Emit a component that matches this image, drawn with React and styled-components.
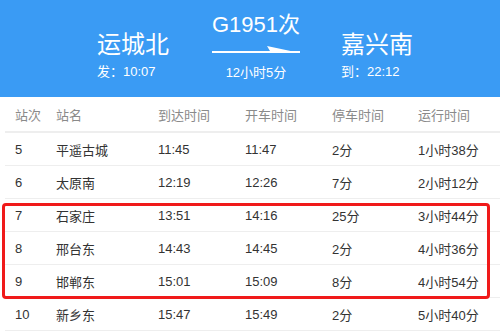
import React from "react";
import styled, { createGlobalStyle } from "styled-components";

const Global = createGlobalStyle`
  html, body { margin: 0; padding: 0; background: #fff; }
  body { font-family: "Liberation Sans", "Noto Sans CJK SC", sans-serif; }
`;

const Page = styled.div`
  width: 500px;
  height: 334px;
  overflow: hidden;
  background: #fff;
`;

const Banner = styled.header`
  height: 97px;
  box-sizing: border-box;
  background: #3a9bf4;
  color: #fff;
  display: flex;
  align-items: flex-start;
  padding: 12px 0 0 97px;
`;

const Station = styled.div`
  display: flex;
  flex-direction: column;
  padding-top: 18px;
  width: 74px;
`;

const StationName = styled.div`
  font-size: 24px;
  line-height: 30px;
  white-space: nowrap;
`;

const SubText = styled.div`
  font-size: 13px;
  line-height: 18px;
  margin-top: 3px;
  white-space: nowrap;
`;

const Train = styled.div`
  display: flex;
  flex-direction: column;
  align-items: center;
  width: 88px;
  margin: 0 41px 0 41px;
`;

const TrainNo = styled.div`
  font-size: 22px;
  line-height: 26px;
  white-space: nowrap;
`;

const Arrow = styled.svg`
  display: block;
  margin-top: 8px;
`;

const Duration = styled(SubText)`
  margin-top: 10px;
`;

const Table = styled.div`
  display: flex;
  flex-direction: column;
`;

const Row = styled.div`
  margin-left: 5px;
  padding-left: 10px;
  display: grid;
  grid-template-columns: 41px 102px 87px 87px 86px 1fr;
  align-items: center;
  height: ${(p) => (p.$head ? "34px" : "32px")};
  border-bottom: ${(p) => (p.$head ? "2px" : "1px")} solid #eeeeee;
  font-size: 13px;
  color: ${(p) => (p.$head ? "#8a8a8a" : "#333")};
  white-space: nowrap;
`;

const Highlight = styled.div`
  position: relative;
  &::after {
    content: "";
    position: absolute;
    top: 4px;
    left: 2px;
    right: 10px;
    bottom: -1px;
    border: 3px solid #f01a1a;
    border-radius: 4px;
    pointer-events: none;
  }
`;

const heads = ["站次", "站名", "到达时间", "开车时间", "停车时间", "运行时间"];
const rows = [
  ["5", "平遥古城", "11:45", "11:47", "2分", "1小时38分"],
  ["6", "太原南", "12:19", "12:26", "7分", "2小时12分"],
  ["7", "石家庄", "13:51", "14:16", "25分", "3小时44分"],
  ["8", "邢台东", "14:43", "14:45", "2分", "4小时36分"],
  ["9", "邯郸东", "15:01", "15:09", "8分", "4小时54分"],
  ["10", "新乡东", "15:47", "15:49", "2分", "5小时40分"],
];

const DataRow = ({ r }) => (
  <Row>
    {r.map((c, i) => (
      <span key={i}>{c}</span>
    ))}
  </Row>
);

export default function App() {
  return (
    <Page>
      <Global />
      <Banner>
        <Station>
          <StationName>运城北</StationName>
          <SubText>发：10:07</SubText>
        </Station>
        <Train>
          <TrainNo>G1951次</TrainNo>
          <Arrow width="88" height="8" viewBox="0 0 88 8">
            <rect x="0" y="5" width="88" height="2" fill="#fff" />
            <polygon points="55,0 88,7 58,5" fill="#fff" />
          </Arrow>
          <Duration>12小时5分</Duration>
        </Train>
        <Station>
          <StationName>嘉兴南</StationName>
          <SubText>到：22:12</SubText>
        </Station>
      </Banner>
      <Table>
        <Row $head>
          {heads.map((h) => (
            <span key={h}>{h}</span>
          ))}
        </Row>
        {rows.slice(0, 2).map((r) => (
          <DataRow key={r[0]} r={r} />
        ))}
        <Highlight>
          {rows.slice(2, 5).map((r) => (
            <DataRow key={r[0]} r={r} />
          ))}
        </Highlight>
        {rows.slice(5).map((r) => (
          <DataRow key={r[0]} r={r} />
        ))}
      </Table>
    </Page>
  );
}
